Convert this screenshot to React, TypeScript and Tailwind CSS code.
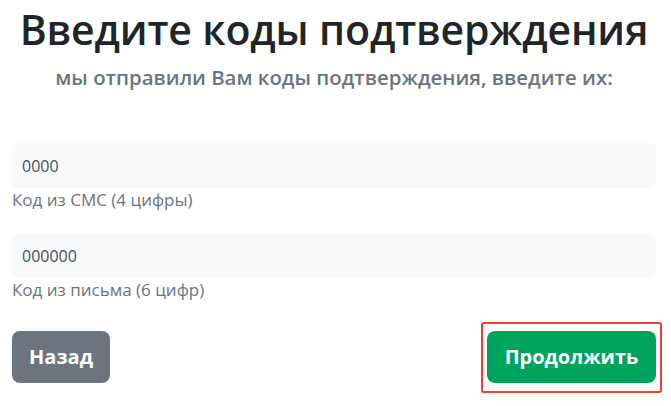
import React from "react";

export default function App() {
  return (
    <div className="w-[671px] h-[406px] bg-white overflow-hidden" style={{ fontFamily: '"Open Sans", "Noto Sans", sans-serif' }}>
      <div className="ml-[12px] w-[644px] flex flex-col">
        <h1 className="text-center text-[41px] leading-[48px] font-semibold text-[#212529] mt-[5px] tracking-[-0.15px]">
          Введите коды подтверждения
        </h1>
        <h5 className="text-center text-[20.4px] leading-[24px] font-semibold text-[#6c757d] mt-[12px]">
          мы отправили Вам коды подтверждения, введите их:
        </h5>
        <div className="mt-[54px] flex flex-col">
          <input
            className="h-[45px] w-full rounded-[6px] bg-[#f8f9fa] px-[10px] text-[16px] text-[#495057] outline-none"
            defaultValue="0000"
          />
          <div className="text-[17px] leading-[24px] text-[#6c757d]">Код из СМС (4 цифры)</div>
          <input
            className="mt-[21px] h-[45px] w-full rounded-[6px] bg-[#f8f9fa] px-[10px] text-[16px] text-[#495057] outline-none"
            defaultValue="000000"
          />
          <div className="text-[17px] leading-[24px] text-[#6c757d]">Код из письма (6 цифр)</div>
        </div>
        <div className="mt-[20px] flex items-start justify-between">
          <button className="mt-[9px] h-[52px] w-[98px] rounded-[8px] bg-[#6c757d] text-white text-[20px] font-bold">
            Назад
          </button>
          <div className="mr-[-6px] rounded-[3px] border-2 border-[#e8412f] px-[4px] pt-[7px] pb-[8px]">
            <button className="h-[52px] w-[169px] rounded-[8px] bg-[#00a35c] text-white text-[20px] font-bold block">
              Продолжить
            </button>
          </div>
        </div>
      </div>
    </div>
  );
}
